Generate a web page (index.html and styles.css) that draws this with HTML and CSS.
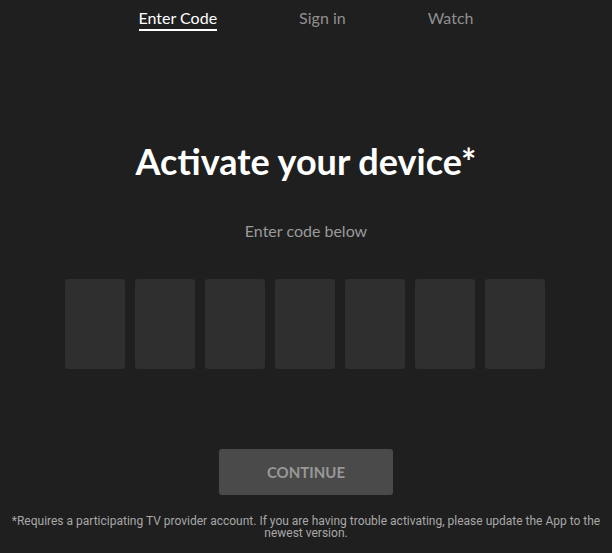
FILE: index.html
```html
<!DOCTYPE html>
<html lang="en">
<head>
<meta charset="utf-8">
<title>Activate your device</title>
<link rel="stylesheet" href="styles.css">
</head>
<body>
<div class="page">
  <nav class="tabs">
    <a class="tab active">Enter Code</a>
    <a class="tab">Sign in</a>
    <a class="tab">Watch</a>
  </nav>
  <main class="main">
    <h1 class="title">Activate your device*</h1>
    <p class="subtitle">Enter code below</p>
    <div class="code">
      <div class="cell"></div>
      <div class="cell"></div>
      <div class="cell"></div>
      <div class="cell"></div>
      <div class="cell"></div>
      <div class="cell"></div>
      <div class="cell"></div>
    </div>
    <button class="continue">CONTINUE</button>
    <p class="note">*Requires a participating TV provider account. If you are having trouble activating, please update the App to the newest version.</p>
  </main>
</div>
</body>
</html>
```
FILE: styles.css
```css
html, body {
  margin: 0;
  padding: 0;
  background: #1f1f1f;
}
.page {
  width: 612px;
  height: 553px;
  font-family: "Lato", "Open Sans", sans-serif;
  color: #fff;
  display: flex;
  flex-direction: column;
  align-items: center;
}
.tabs {
  display: flex;
  gap: 82px;
  justify-content: center;
  padding-top: 8px;
  margin-left: 0;
}
.tab {
  font-size: 16px;
  line-height: 20px;
  color: #8f8f8f;
  padding-bottom: 1px;
  border-bottom: 2px solid transparent;
}
.tab.active {
  color: #fff;
  border-bottom-color: #fff;
}
.main {
  display: flex;
  flex-direction: column;
  align-items: center;
  width: 100%;
}
.title {
  margin: 108px 0 0;
  font-size: 36px;
  line-height: 44px;
  font-weight: 700;
}
.subtitle {
  margin: 38px 0 0;
  font-size: 16px;
  line-height: 20px;
  color: #9a9a9a;
}
.code {
  display: flex;
  gap: 10px;
  margin-top: 38px;
  margin-right: 2px;
}
.cell {
  width: 60px;
  height: 90px;
  background: #2f2f2f;
  border-radius: 3px;
}
.continue {
  margin-top: 80px;
  width: 174px;
  height: 46px;
  border: 0;
  border-radius: 3px;
  background: #4a4a4a;
  color: #989898;
  font-family: "Lato", "Open Sans", sans-serif;
  font-weight: 700;
  font-size: 15px;
}
.note {
  margin: 20px 0 0;
  padding: 0 10px;
  text-align: center;
  font-family: "Liberation Sans Narrow", "Roboto", sans-serif;
  font-size: 12px;
  line-height: 12px;
  color: #a8a8a8;
}
```
